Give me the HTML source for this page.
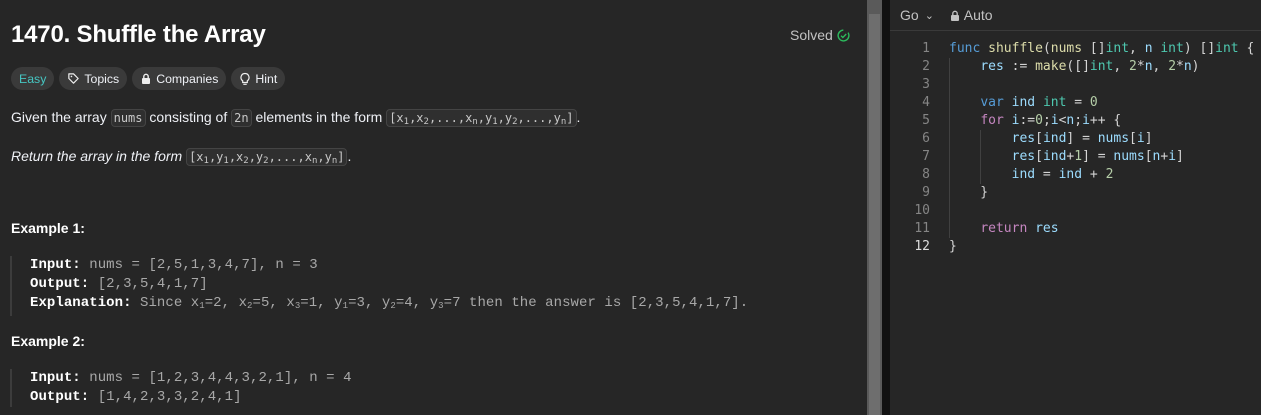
<!DOCTYPE html>
<html><head><meta charset="utf-8"><style>
*{margin:0;padding:0;box-sizing:border-box}
body{width:1261px;height:415px;background:#262626;overflow:hidden;font-family:"Liberation Sans",sans-serif;color:#eff1f6;position:relative}
.left{position:absolute;left:0;top:0;width:867px;height:415px;background:#262626}
h1{position:absolute;left:11px;top:21px;font-size:24px;font-weight:bold;color:#fff;letter-spacing:-0.2px}
.solved{position:absolute;left:790px;top:27px;font-size:14px;color:#c2c2c2}
.tags{position:absolute;left:11px;top:67px;display:flex;gap:5px}
.tag{height:23px;border-radius:12px;background:#3a3a3a;font-size:12.3px;padding:0 8px;display:flex;align-items:center;gap:4px;color:#eff1f6}
p{position:absolute;left:11px;font-size:14px;color:#eff1f6}
code.i{font-family:"DejaVu Sans Mono",monospace;font-size:12px;color:#c8c8c8;background:#2f2f2f;border:1px solid #444;border-radius:4px;padding:1px 2px}
.ex{position:absolute;left:11px;font-size:14px;font-weight:bold;color:#fff}
.pre{position:absolute;left:10px;border-left:2px solid #3c3c3c;padding-left:18px;font-family:"Liberation Mono",monospace;font-size:14px;line-height:19px;color:#a8a8a8;letter-spacing:0.06px}
.pre b{color:#fff}
sub{font-size:9px;vertical-align:-2px}
.sb{position:absolute;left:867px;top:0;width:15px;height:415px;background:#5a5a5a}
.thumb{position:absolute;left:869px;top:14px;width:11px;height:401px;background:#6e6e6e}
.div{position:absolute;left:882px;top:0;width:8px;height:415px;background:#111}
.right{position:absolute;left:890px;top:0;width:371px;height:415px;background:#262626}
.bar{height:31px;border-bottom:1px solid #3a3a3a;font-size:14px;color:#c2c2c2;display:flex;align-items:center;padding-left:10px}
.code{position:absolute;left:0;top:40px;font-family:"DejaVu Sans Mono",monospace;font-size:13px;line-height:18px;color:#d4d4d4;white-space:pre}
.ln{position:absolute;left:0;width:40px;text-align:right;color:#858585}
.cl{position:absolute;left:59px}
.k{color:#569cd6}.f{color:#dcdcaa}.t{color:#4ec9b0}.v{color:#9cdcfe}.n{color:#b5cea8}.c{color:#c586c0}
.guide{position:absolute;width:1px;background:#404040}
</style></head><body>
<div class="left">
<h1>1470. Shuffle the Array</h1>
<div class="solved">Solved <svg width="13" height="13" viewBox="0 0 14 14" style="vertical-align:-2px"><circle cx="7" cy="7" r="5.8" fill="none" stroke="#2cbb5d" stroke-width="1.5" stroke-dasharray="30 6" transform="rotate(-30 7 7)"/><path d="M4.3 7.2l2 2 3.6-3.8" fill="none" stroke="#2cbb5d" stroke-width="1.5"/></svg></div>
<div class="tags">
<div class="tag" style="color:#46c6c2">Easy</div>
<div class="tag"><svg width="13" height="13" viewBox="0 0 14 14"><path d="M2 2h5l5 5-5 5-5-5z" fill="none" stroke="#eee" stroke-width="1.3" stroke-linejoin="round"/><circle cx="4.8" cy="4.8" r="0.9" fill="#eee"/></svg>Topics</div>
<div class="tag"><svg width="12" height="12" viewBox="0 0 12 12"><rect x="2" y="5" width="8" height="6" rx="1" fill="#eee"/><path d="M3.8 5V3.5a2.2 2.2 0 0 1 4.4 0V5" fill="none" stroke="#eee" stroke-width="1.4"/></svg>Companies</div>
<div class="tag"><svg width="12" height="14" viewBox="0 0 12 14"><path d="M6 1.5a4 4 0 0 0-2.3 7.3V10.5h4.6V8.8A4 4 0 0 0 6 1.5zM4.3 12.3h3.4" fill="none" stroke="#eee" stroke-width="1.2"/></svg>Hint</div>
</div>
<p style="top:109px">Given the array <code class="i">nums</code> consisting of <code class="i">2n</code> elements in the form <code class="i">[x<sub>1</sub>,x<sub>2</sub>,...,x<sub>n</sub>,y<sub>1</sub>,y<sub>2</sub>,...,y<sub>n</sub>]</code>.</p>
<p style="top:148px"><i>Return the array in the form</i> <code class="i">[x<sub>1</sub>,y<sub>1</sub>,x<sub>2</sub>,y<sub>2</sub>,...,x<sub>n</sub>,y<sub>n</sub>]</code>.</p>
<div class="ex" style="top:220px">Example 1:</div>
<div class="pre" style="top:256px"><b>Input:</b> nums = [2,5,1,3,4,7], n = 3<br><b>Output:</b> [2,3,5,4,1,7]<br><b>Explanation:</b> Since x<sub>1</sub>=2, x<sub>2</sub>=5, x<sub>3</sub>=1, y<sub>1</sub>=3, y<sub>2</sub>=4, y<sub>3</sub>=7 then the answer is [2,3,5,4,1,7].</div>
<div class="ex" style="top:333px">Example 2:</div>
<div class="pre" style="top:369px"><b>Input:</b> nums = [1,2,3,4,4,3,2,1], n = 4<br><b>Output:</b> [1,4,2,3,3,2,4,1]</div>
</div>
<div class="sb"></div><div class="thumb"></div>
<div class="div"></div>
<div class="right">
<div class="bar">Go <span style="margin:0 16px 0 6px;font-size:11px">&#8964;</span><svg width="10" height="11" viewBox="0 0 10 11"><rect x="1" y="5" width="8" height="6" rx="1" fill="#c2c2c2"/><path d="M2.8 5V3.5a2.2 2.2 0 0 1 4.4 0V5" fill="none" stroke="#c2c2c2" stroke-width="1.3"/></svg>&nbsp;Auto</div>
<div class="guide" style="left:59px;top:58px;height:180px"></div>
<div class="guide" style="left:90px;top:130px;height:54px"></div>
<div class="code">
<div class="ln" style="top:0">1</div><div class="ln" style="top:18px">2</div><div class="ln" style="top:36px">3</div><div class="ln" style="top:54px">4</div><div class="ln" style="top:72px">5</div><div class="ln" style="top:90px">6</div><div class="ln" style="top:108px">7</div><div class="ln" style="top:126px">8</div><div class="ln" style="top:144px">9</div><div class="ln" style="top:162px">10</div><div class="ln" style="top:180px">11</div><div class="ln" style="top:198px;color:#ddd">12</div>
<div class="cl" style="top:0"><span class="k">func</span> <span class="f">shuffle</span>(<span class="f">nums</span> []<span class="t">int</span>, <span class="v">n</span> <span class="t">int</span>) []<span class="t">int</span> {
    <span class="v">res</span> := <span class="f">make</span>([]<span class="t">int</span>, <span class="n">2</span>*<span class="v">n</span>, <span class="n">2</span>*<span class="v">n</span>)

    <span class="k">var</span> <span class="v">ind</span> <span class="t">int</span> = <span class="n">0</span>
    <span class="c">for</span> <span class="v">i</span>:=<span class="n">0</span>;<span class="v">i</span>&lt;<span class="v">n</span>;<span class="v">i</span>++ {
        <span class="v">res</span>[<span class="v">ind</span>] = <span class="v">nums</span>[<span class="v">i</span>]
        <span class="v">res</span>[<span class="v">ind</span>+<span class="n">1</span>] = <span class="v">nums</span>[<span class="v">n</span>+<span class="v">i</span>]
        <span class="v">ind</span> = <span class="v">ind</span> + <span class="n">2</span>
    }

    <span class="c">return</span> <span class="v">res</span>
}</div>
</div>
</div>
</body></html>
